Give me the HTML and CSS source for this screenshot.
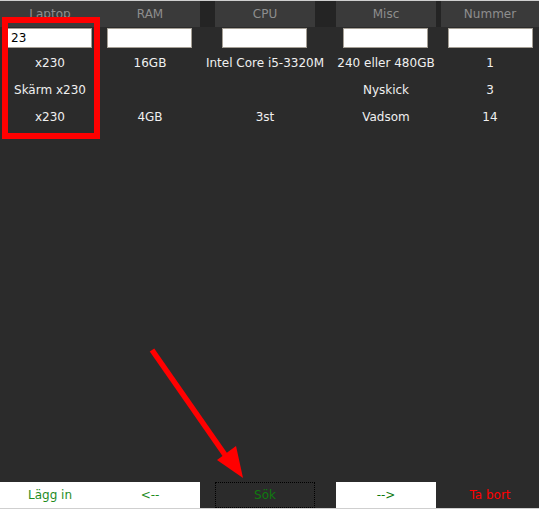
FILE: index.html
```html
<!DOCTYPE html>
<html>
<head>
<meta charset="utf-8">
<link rel="stylesheet" href="styles.css">
</head>
<body>
<div class="app">
  <div class="row head">
    <div class="cell c1 hcell">Laptop</div>
    <div class="cell c2 hcell">RAM</div>
    <div class="cell c3 hcell">CPU</div>
    <div class="cell c4 hcell">Misc</div>
    <div class="cell c5 hcell">Nummer</div>
  </div>
  <div class="row inputs">
    <div class="cell c1"><input class="field" type="text" value="23"></div>
    <div class="cell c2"><input class="field" type="text"></div>
    <div class="cell c3"><input class="field" type="text"></div>
    <div class="cell c4"><input class="field" type="text"></div>
    <div class="cell c5"><input class="field" type="text"></div>
  </div>
  <div class="rows">
    <div class="row data">
      <div class="cell c1">x230</div>
      <div class="cell c2">16GB</div>
      <div class="cell c3">Intel Core i5-3320M</div>
      <div class="cell c4">240 eller 480GB</div>
      <div class="cell c5">1</div>
    </div>
    <div class="row data">
      <div class="cell c1">Skärm x230</div>
      <div class="cell c2"></div>
      <div class="cell c3"></div>
      <div class="cell c4">Nyskick</div>
      <div class="cell c5">3</div>
    </div>
    <div class="row data">
      <div class="cell c1">x230</div>
      <div class="cell c2">4GB</div>
      <div class="cell c3">3st</div>
      <div class="cell c4">Vadsom</div>
      <div class="cell c5">14</div>
    </div>
  </div>
  <div class="spacer"></div>
  <div class="row buttons">
    <div class="cell c1 btn light green">Lägg in</div>
    <div class="cell c2 btn light green">&lt;--</div>
    <div class="cell c3 btn focus dgreen">Sök</div>
    <div class="cell c4 btn light dgreen">--&gt;</div>
    <div class="cell c5 btn red">Ta bort</div>
  </div>
  <div class="highlight"></div>
  <svg class="arrow" width="539" height="509" viewBox="0 0 539 509">
    <line x1="152" y1="350" x2="230" y2="462" stroke="#ff0000" stroke-width="5.5"/>
    <polygon points="243,478 217,460 236,446" fill="#ff0000"/>
  </svg>
</div>
</body>
</html>
```
FILE: styles.css
```css
html, body {
  margin: 0;
  padding: 0;
  overflow: hidden;
}
body {
  background: #2b2b2b;
  font-family: "DejaVu Sans", sans-serif;
  font-size: 12px;
}
.app {
  position: relative;
  width: 539px;
  height: 509px;
  box-sizing: border-box;
  border-top: 1px solid #cfcfcf;
  border-bottom: 1px solid #cfcfcf;
  display: flex;
  flex-direction: column;
}
.row {
  display: flex;
}
.cell {
  width: 100px;
  flex: none;
  display: flex;
  justify-content: center;
  color: #f0f0f0;
  white-space: nowrap;
}
.inputs .cell {
  justify-content: flex-start;
}
.c3 { margin-left: 15px; }
.c4 { margin-left: 21px; }
.c5 { margin-left: 5px; width: 98px; }
.head {
  height: 26px;
  background: #242424;
}
.hcell {
  background: #3a3a3a;
  color: #8e8e8e;
  line-height: 26px;
}
.inputs {
  margin-top: 1px;
  height: 21px;
}
.field {
  display: block;
  box-sizing: border-box;
  width: 85px;
  height: 20px;
  margin: 0 0 0 7px;
  padding: 0 3px;
  border: 1px solid #a59f95;
  background: #fff;
  color: #000;
  font-family: "DejaVu Sans", sans-serif;
  font-size: 12px;
  outline: none;
}
.rows {
  margin-top: 1px;
}
.data {
  height: 27px;
  line-height: 27px;
}
.spacer {
  flex: 1;
}
.buttons {
  height: 26px;
}
.btn {
  line-height: 26px;
  box-sizing: border-box;
}
.light { background: #ffffff; }
.green { color: #1f8c1f; }
.dgreen { color: #0f7a0f; }
.red { color: #ff0000; }
.focus {
  border: 1px dotted #000;
  line-height: 24px;
}
.highlight {
  position: absolute;
  left: 2px;
  top: 16px;
  width: 98px;
  height: 122px;
  box-sizing: border-box;
  border: 6px solid #ff0000;
}
.arrow {
  position: absolute;
  left: 0;
  top: -1px;
}
```
